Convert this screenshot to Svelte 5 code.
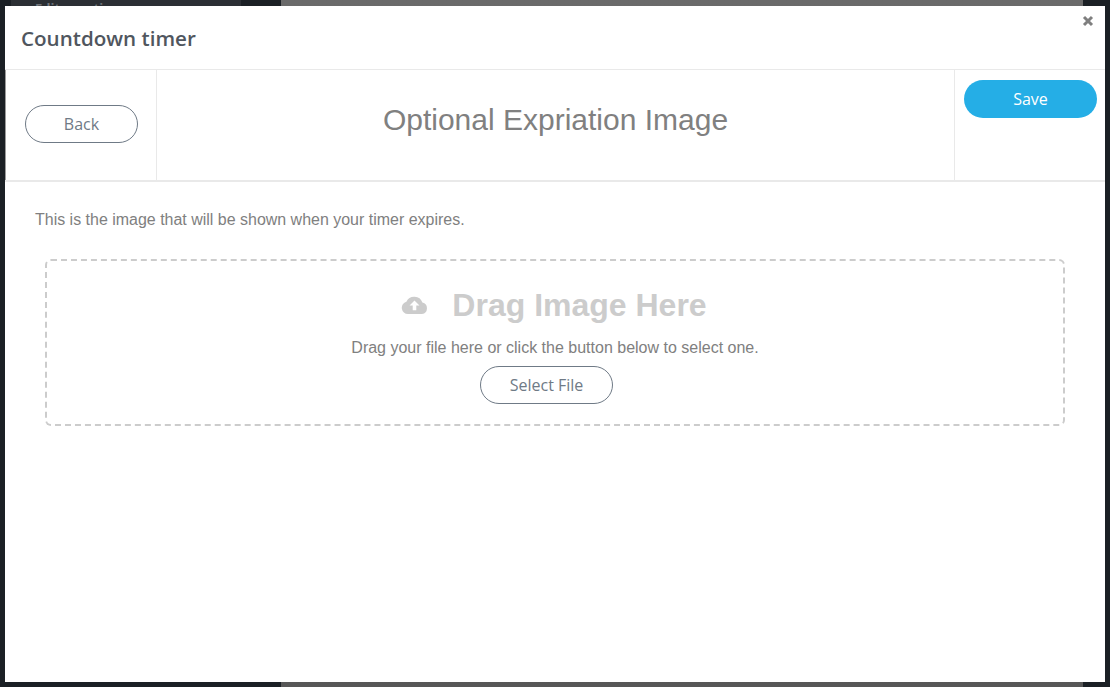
<script>
  let title = 'Countdown timer';
</script>

<div class="page">
  <aside class="sidebar">
    <div class="panel">
      <span class="panel-title">Editor options</span>
    </div>
  </aside>
  <main class="canvas"></main>
  <div class="edge"></div>
</div>

<div class="modal">
  <button class="close" aria-label="Close">
    <svg viewBox="0 0 12 12" width="12" height="12">
      <path d="M2 2l8 8M10 2l-8 8" stroke="#7f7f7f" stroke-width="3" fill="none" />
    </svg>
  </button>
  <header class="modal-header">
    <h4>{title}</h4>
  </header>
  <div class="toolbar">
    <div class="cell back-cell">
      <button class="btn">Back</button>
    </div>
    <div class="cell title-cell">
      <h2>Optional Expriation Image</h2>
    </div>
    <div class="cell save-cell">
      <button class="btn primary">Save</button>
    </div>
  </div>
  <div class="body">
    <p class="hint">This is the image that will be shown when your timer expires.</p>
    <div class="dropzone">
      <div class="drop-title">
        <svg viewBox="0 0 27 18" width="27" height="18">
          <path d="M7 18a6.2 6.2 0 0 1-1.6-12.2A8.6 8.6 0 0 1 21.4 6.6 5.8 5.8 0 0 1 21 18z" fill="#cccccc" />
          <path d="M13.5 4.6l5 5h-3.2v4.6h-3.6V9.600h-3.200z" fill="#ffffff" />
        </svg>
        <span>Drag Image Here</span>
      </div>
      <p class="drop-text">Drag your file here or click the button below to select one.</p>
      <button class="btn select">Select File</button>
    </div>
  </div>
</div>

<style>
  :global(body) {
    margin: 0;
    overflow: hidden;
    background: #1b2025;
  }

  .page {
    display: flex;
    width: 1110px;
    height: 687px;
    overflow: hidden;
  }

  .sidebar {
    width: 281px;
    background: #1b2025;
    padding: 0 40px 0 11px;
    box-sizing: border-box;
  }

  .panel {
    height: 6px;
    background: #2b2f34;
    padding-left: 24px;
    overflow: hidden;
  }

  .panel-title {
    display: block;
    margin-top: -1px;
    font: 700 13px/18px "Open Sans", sans-serif;
    color: #70757a;
  }

  .canvas {
    flex: 1;
    background: linear-gradient(#6a6a6a, #575757);
  }

  .edge {
    width: 27px;
    background: #1b2025;
  }

  .modal {
    position: absolute;
    left: 5px;
    top: 6px;
    width: 1100px;
    height: 676px;
    background: #fff;
    font-family: "Liberation Sans", Arial, sans-serif;
  }

  .close {
    position: absolute;
    top: 9px;
    right: 11px;
    width: 12px;
    height: 12px;
    padding: 0;
    border: 0;
    background: none;
    display: flex;
  }

  .modal-header {
    height: 64px;
    padding-left: 16px;
    box-sizing: border-box;
    border-bottom: 1px solid #e9e9e9;
  }

  h4 {
    margin: 0;
    padding-top: 19px;
    font: 600 20.6px/27px "Open Sans", sans-serif;
    color: #50565e;
  }

  .toolbar {
    display: flex;
    height: 112px;
    box-sizing: border-box;
    border-bottom: 2px solid #e9e9e9;
  }

  .cell {
    box-sizing: border-box;
  }

  .back-cell {
    width: 152px;
    border-right: 1px solid #e9e9e9;
    border-left: 1px solid #9b9b9b;
    padding: 35px 0 0 19px;
  }

  .title-cell {
    flex: 1;
    text-align: center;
  }

  h2 {
    margin: 0;
    padding-top: 30px;
    font-weight: 400;
    font-size: 30px;
    line-height: 40px;
    color: #808080;
  }

  .save-cell {
    width: 151px;
    border-left: 1px solid #e9e9e9;
    padding: 10px 0 0 9px;
  }

  .btn {
    display: block;
    width: 113px;
    height: 38px;
    padding: 0;
    border: 1px solid #6f7a86;
    border-radius: 19px;
    background: #fff;
    color: #6f7a86;
    font: 400 16px/1 "Open Sans", sans-serif;
  }

  .btn.primary {
    width: 133px;
    border: 0;
    background: #25aee6;
    color: #fff;
  }

  .btn.select {
    width: 133px;
    margin: 0 auto;
    padding-left: 1px;
    position: relative;
    left: -9px;
  }

  .body {
    padding: 0 40px 0 30px;
  }

  .hint {
    margin: 0;
    padding-top: 28px;
    font-size: 15.98px;
    line-height: 20px;
    color: #808080;
  }

  .dropzone {
    box-sizing: border-box;
    height: 167px;
    margin: 29px 0 0 10px;
    border: 2px dashed #cccccc;
    border-radius: 6px;
    text-align: center;
  }

  .drop-title {
    display: flex;
    justify-content: center;
    align-items: center;
    gap: 24px;
    margin-top: 24px;
    padding-right: 2px;
    height: 40px;
    font-size: 32px;
    font-weight: 700;
    color: #cccccc;
  }

  .drop-text {
    margin: 0;
    padding-top: 13px;
    font-size: 16px;
    line-height: 20px;
    color: #808080;
  }

  .drop-text + .btn {
    margin-top: 8px;
  }
</style>
